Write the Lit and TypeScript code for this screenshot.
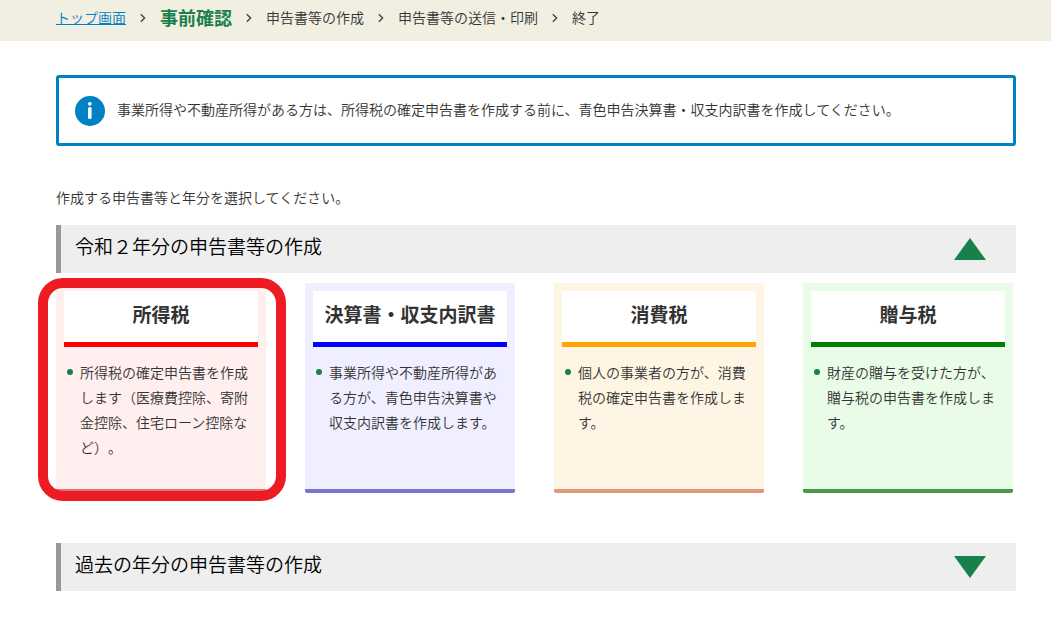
import { LitElement, html, css, svg } from "lit";
import { customElement, property, state } from "lit/decorators.js";
import { classMap } from "lit/directives/class-map.js";

interface TaxForm {
  id: string;
  title: string;
  text: string;
  highlighted?: boolean;
}

const FORMS: TaxForm[] = [
  {
    id: "income",
    title: "所得税",
    text: "所得税の確定申告書を作成します（医療費控除、寄附金控除、住宅ローン控除など）。",
    highlighted: true,
  },
  {
    id: "statement",
    title: "決算書・収支内訳書",
    text: "事業所得や不動産所得がある方が、青色申告決算書や収支内訳書を作成します。",
  },
  {
    id: "consumption",
    title: "消費税",
    text: "個人の事業者の方が、消費税の確定申告書を作成します。",
  },
  {
    id: "gift",
    title: "贈与税",
    text: "財産の贈与を受けた方が、贈与税の申告書を作成します。",
  },
];

const STEPS = ["トップ画面", "事前確認", "申告書等の作成", "申告書等の送信・印刷", "終了"];

@customElement("step-trail")
export class StepTrail extends LitElement {
  static styles = css`
    :host {
      display: block;
      background: #f1eee2;
    }
    .list {
      display: flex;
      align-items: center;
      margin: 0;
      padding: 5px 35px 11px 56px;
      list-style: none;
      line-height: 25px;
    }
    .item {
      display: flex;
      align-items: center;
    }
    .link {
      color: #0081c5;
    }
    .current {
      color: #197f4b;
      font-size: 18px;
      font-weight: 700;
    }
    .arrow {
      display: block;
      margin: 0 14px;
    }
  `;

  render() {
    return html`
      <nav>
        <ol class="list">
          ${STEPS.map(
            (step, i) => html`<li class="item">
              ${i > 0
                ? html`<svg class="arrow" width="6" height="10" viewBox="0 0 6 10" aria-hidden="true">
                    ${svg`<path d="M.8 1.2 4.6 5 .8 8.8" fill="none" stroke="#444" stroke-width="1.4" />`}
                  </svg>`
                : ""}
              ${i === 0
                ? html`<a class="link" href="#top">${step}</a>`
                : html`<span class=${i === 1 ? "current" : "step"}>${step}</span>`}
            </li>`
          )}
        </ol>
      </nav>
    `;
  }
}

@customElement("form-card")
export class FormCard extends LitElement {
  @property({ attribute: false }) form!: TaxForm;

  static styles = css`
    :host {
      display: block;
    }
    .card {
      position: relative;
      box-sizing: border-box;
      height: 100%;
      min-height: 210px;
      padding: 8px;
      border-bottom: 4px solid;
      border-radius: 2px;
    }
    .income { background: #ffefef; border-color: #dc7878; }
    .statement { background: #f0efff; border-color: #7878cd; }
    .consumption { background: #fff5e4; border-color: #e09877; }
    .gift { background: #e8fce7; border-color: #499b49; }
    .title {
      margin: 0;
      padding: 9px 0 14px;
      background: #fff;
      border-bottom: 5px solid;
      font-size: 19px;
      font-weight: 700;
      line-height: 28px;
      text-align: center;
    }
    .income .title { border-color: #f00; }
    .statement .title { border-color: #00f; }
    .consumption .title { border-color: #ffa500; }
    .gift .title { border-color: #008000; }
    .link {
      color: inherit;
      text-decoration: none;
    }
    .notes {
      margin: 13px 0 0;
      padding: 0 8px 16px 16px;
      list-style: none;
      line-height: 25px;
    }
    .note {
      position: relative;
    }
    .note::before {
      content: "";
      position: absolute;
      left: -13px;
      top: 9px;
      width: 6px;
      height: 6px;
      border-radius: 50%;
      background: #197f4b;
    }
    .ring {
      position: absolute;
      inset: -5px -20px -12px -18px;
      border: 10px solid #ed1c24;
      border-radius: 25px;
      pointer-events: none;
    }
  `;

  render() {
    const { id, title, text, highlighted } = this.form;
    return html`
      <article class="card ${id}">
        <h3 class="title"><a class="link" href="#${id}">${title}</a></h3>
        <ul class="notes">
          <li class="note">${text}</li>
        </ul>
        ${highlighted ? html`<div class="ring"></div>` : ""}
      </article>
    `;
  }
}

@customElement("year-section")
export class YearSection extends LitElement {
  @property() heading = "";
  @property({ type: Boolean }) open = false;

  static styles = css`
    :host {
      display: block;
    }
    .heading {
      margin: 0;
      font-weight: 350;
    }
    .toggle {
      display: flex;
      align-items: center;
      justify-content: space-between;
      box-sizing: border-box;
      width: 100%;
      padding: 7px 30px 13px 14px;
      border: 0;
      border-left: 5px solid #999;
      background: #eee;
      color: #000;
      font: inherit;
      font-size: 19px;
      line-height: 28px;
      text-align: left;
      cursor: pointer;
    }
    .marker {
      display: block;
      flex: none;
      margin-top: 6px;
      fill: #197f4b;
    }
    .down {
      transform: rotate(180deg);
    }
    .panel {
      padding: 10px 3px 0 0;
    }
  `;

  render() {
    return html`
      <h2 class="heading">
        <button
          class="toggle"
          type="button"
          aria-expanded=${this.open ? "true" : "false"}
          @click=${() => (this.open = !this.open)}
        >
          ${this.heading}
          <svg
            class=${classMap({ marker: true, down: !this.open })}
            width="32"
            height="22"
            viewBox="0 0 32 22"
            aria-hidden="true"
          >
            <path d="M16 0 32 22H0z" />
          </svg>
        </button>
      </h2>
      ${this.open ? html`<div class="panel"><slot></slot></div>` : ""}
    `;
  }
}

@customElement("app-root")
export class AppRoot extends LitElement {
  @state() private forms = FORMS;

  static styles = css`
    :host {
      display: block;
      background: #fff;
      color: #333;
      font-family: "Noto Sans CJK JP", sans-serif;
      font-size: 14px;
      font-weight: 350;
      line-height: 25px;
      text-spacing-trim: space-all;
    }
    .main {
      display: flex;
      flex-direction: column;
      padding: 34px 35px 27px 56px;
    }
    .info {
      display: flex;
      align-items: center;
      gap: 12px;
      padding: 18px 16px 17px;
      border: 3px solid #0081c5;
      border-radius: 3px;
    }
    .icon {
      flex: none;
    }
    .text {
      margin: 0;
      padding-bottom: 4px;
    }
    .lead {
      margin: 39px 0 15px;
    }
    .cards {
      display: grid;
      grid-template-columns: repeat(4, 1fr);
      gap: 39px;
    }
    .past {
      margin-top: 50px;
    }
  `;

  render() {
    return html`
      <step-trail></step-trail>
      <main class="main">
        <div class="info">
          <svg class="icon" width="30" height="30" viewBox="0 0 30 30" aria-hidden="true">
            <circle cx="15" cy="15" r="15" fill="#0081c5" />
            <circle cx="14.8" cy="7.8" r="1.9" fill="#fff" />
            <rect x="13" y="11" width="3.6" height="12" rx="1.5" fill="#fff" />
          </svg>
          <p class="text">
            事業所得や不動産所得がある方は、所得税の確定申告書を作成する前に、青色申告決算書・収支内訳書を作成してください。
          </p>
        </div>
        <p class="lead">作成する申告書等と年分を選択してください。</p>
        <year-section heading="令和２年分の申告書等の作成" open>
          <div class="cards">
            ${this.forms.map((form) => html`<form-card .form=${form}></form-card>`)}
          </div>
        </year-section>
        <year-section class="past" heading="過去の年分の申告書等の作成"></year-section>
      </main>
    `;
  }
}
